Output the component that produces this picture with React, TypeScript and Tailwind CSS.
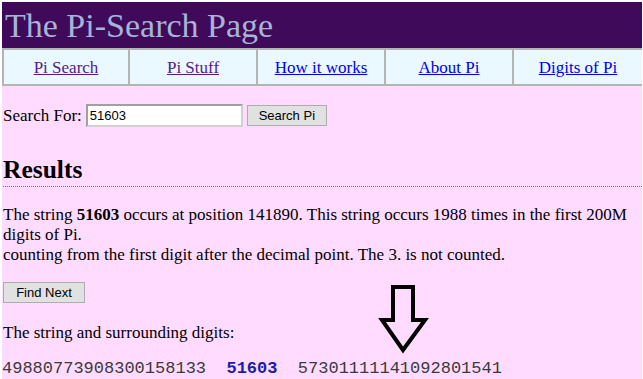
import React from "react";

const serif = { fontFamily: '"Liberation Serif", "Times New Roman", serif' };

export default function App() {
  const links = [
    { t: "Pi Search", visited: true },
    { t: "Pi Stuff", visited: true },
    { t: "How it works", visited: false },
    { t: "About Pi", visited: false },
    { t: "Digits of Pi", visited: false },
  ];
  return (
    <div className="w-[643px] h-[379px] overflow-hidden bg-white pt-[2px] pl-[2px] pr-[1px]" style={serif}>
      <div className="relative h-[377px] bg-[#ffdcff] text-black">
        <div className="h-[46px] bg-[#400a5a] pl-[3px] flex items-center">
          <span className="text-[34px] leading-none text-[#a6b4d6] pt-[2px]">The Pi-Search Page</span>
        </div>
        <div className="grid grid-cols-5 h-[38px] bg-[#eaf8ff] border-t-2 border-b-2 border-[#b4b4b4]">
          {links.map((l, i) => (
            <div
              key={l.t}
              className={`flex items-center justify-center border-[#b4b4b4] ${i < 4 ? "border-r-2" : ""} ${i === 0 ? "border-l-2" : ""}`}
            >
              <a
                href="#"
                className={`text-[17px] underline pt-[1px] ${l.visited ? "text-[#551a8b]" : "text-[#0000ee]"}`}
              >
                {l.t}
              </a>
            </div>
          ))}
        </div>
        <div className="pl-[1px]">
          <div className="mt-[18px] flex items-center h-[23px]">
            <span className="text-[17px]">Search For:</span>
            <input
              defaultValue="51603"
              className="ml-[4px] w-[157px] h-[23px] bg-white border-2 border-[#a0a0a0] border-r-[#d0d0d0] border-b-[#d0d0d0] px-[2px] text-[13px] text-black outline-none"
              style={{ fontFamily: '"Liberation Sans", Arial, sans-serif' }}
            />
            <button
              className="ml-[4px] w-[80px] h-[21px] bg-[#e1e1e1] border border-[#adadad] text-[13px] text-black"
              style={{ fontFamily: '"Liberation Sans", Arial, sans-serif' }}
            >
              Search Pi
            </button>
          </div>
          <h2 className="mt-[29px] text-[25.5px] font-bold leading-[28px] pb-[2px]">Results</h2>
          <div className="h-[1px] bg-[repeating-linear-gradient(90deg,#ff3355_0px,#ff3355_1px,transparent_1px,transparent_2px)]" />
          <p className="mt-[18px] text-[17px] leading-[20px]">
            The string <b>51603</b> occurs at position 141890. This string occurs 1988 times in the first 200M digits of Pi.
            <br />
            counting from the first digit after the decimal point. The 3. is not counted.
          </p>
          <button
            className="mt-[17px] w-[82px] h-[21px] bg-[#e1e1e1] border border-[#adadad] text-[13px] text-black"
            style={{ fontFamily: '"Liberation Sans", Arial, sans-serif' }}
          >
            Find Next
          </button>
          <p className="mt-[19px] text-[17px] leading-[20px]">The string and surrounding digits:</p>
          <div
            className="mt-[16px] text-[17px] leading-[20px] text-[#3a3a3a] whitespace-pre -ml-[1px]"
            style={{ fontFamily: '"Liberation Mono", "Courier New", monospace' }}
          >
            {"49880773908300158133  "}
            <b className="text-[#1c1ca8]">51603</b>
            {"  57301111141092801541"}
          </div>
        </div>
        <svg
          className="absolute left-[376px] top-[281px]"
          width="52"
          height="74"
          viewBox="0 0 52 74"
        >
          <path
            d="M15 4 H35 V37 H47 L25 67 L4 37 H15 Z"
            fill="none"
            stroke="#000"
            strokeWidth="4"
            strokeLinejoin="miter"
          />
        </svg>
      </div>
    </div>
  );
}
